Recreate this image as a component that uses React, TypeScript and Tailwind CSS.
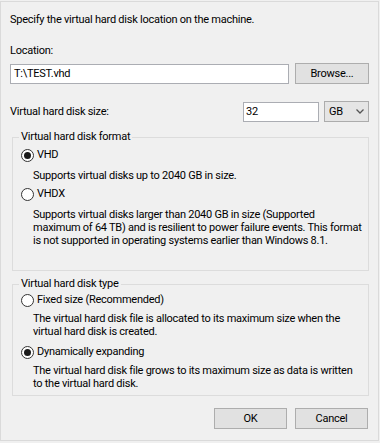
import { useState } from 'react';

function Radio({ checked, label, onClick }: { checked: boolean; label: string; onClick: () => void }) {
  return (
    <button type="button" onClick={onClick} className="flex h-[16px] items-center gap-[3px] text-left">
      <span className="flex h-[13px] w-[13px] items-center justify-center rounded-full border border-[#333333] bg-white">
        {checked && <span className="h-[7px] w-[7px] rounded-full bg-[#1a1a1a]" />}
      </span>
      <span>{label}</span>
    </button>
  );
}

function WinButton({ children }: { children: React.ReactNode }) {
  return (
    <button
      type="button"
      className="flex h-[21px] w-[73px] items-center justify-center border border-[#adadad] bg-[#e1e1e1] hover:border-[#0078d7] hover:bg-[#e5f1fb]"
    >
      {children}
    </button>
  );
}

export default function App() {
  const [format, setFormat] = useState<'vhd' | 'vhdx'>('vhd');
  const [diskType, setDiskType] = useState<'fixed' | 'dynamic'>('dynamic');

  return (
    <div className="h-[443px] w-[380px] whitespace-nowrap bg-[#f0f0f0] pt-[1px] font-['Roboto',sans-serif] text-[11px] leading-[16px] tracking-[-0.25px] text-black">
      <div className="flex h-[440px] w-[379px] flex-col border border-[#dadada] pt-[10px]">
        <p className="pl-[9px]">Specify the virtual hard disk location on the machine.</p>

        <p className="mt-[15px] pl-[9px]">Location:</p>
        <div className="mt-[4px] flex h-[21px] items-start pl-[9px]">
          <div className="mt-[1px] flex h-[20px] w-[279px] items-center border border-[#abadb3] bg-white pl-[3px]">
            T:\TEST.vhd
          </div>
          <div className="ml-[6px]">
            <button
              type="button"
              className="flex h-[21px] w-[74px] items-center justify-center border border-[#adadad] bg-[#e1e1e1] hover:border-[#0078d7] hover:bg-[#e5f1fb]"
            >
              Browse...
            </button>
          </div>
        </div>

        <div className="mt-[17px] flex h-[21px] items-center pl-[9px]">
          <span className="flex-1">Virtual hard disk size:</span>
          <div className="flex h-[20px] w-[76px] items-center border border-[#abadb3] bg-white pl-[2px]">32</div>
          <div className="ml-[5px] mr-[9px] flex h-[21px] w-[45px] items-center justify-between border border-[#acacac] bg-[#e5e5e5] pl-[4px] pr-[4px]">
            <span>GB</span>
            <svg width="8" height="5" viewBox="0 0 8 5" fill="none" stroke="#555" strokeWidth="1.3">
              <path d="M0.5 0.5 L4 4 L7.5 0.5" />
            </svg>
          </div>
        </div>

        <fieldset className="ml-[11px] mt-[7px] w-[357px] border border-[#dcdcdc] pb-[23px] pl-[8px]">
          <legend className="ml-[-2px] px-[2px]">Virtual hard disk format</legend>
          <div className="mt-[2px]">
            <Radio checked={format === 'vhd'} label="VHD" onClick={() => setFormat('vhd')} />
          </div>
          <p className="mt-[6px] pl-[12px] leading-[13px]">Supports virtual disks up to 2040 GB in size.</p>
          <div className="mt-[4px]">
            <Radio checked={format === 'vhdx'} label="VHDX" onClick={() => setFormat('vhdx')} />
          </div>
          <p className="mt-[6px] pl-[12px] leading-[13px]">
            Supports virtual disks larger than 2040 GB in size (Supported
            <br />
            maximum of 64 TB) and is resilient to power failure events. This format
            <br />
            is not supported in operating systems earlier than Windows 8.1.
          </p>
        </fieldset>

        <fieldset className="ml-[11px] mt-[5px] w-[357px] border border-[#dcdcdc] pb-[5px] pl-[8px]">
          <legend className="ml-[-2px] px-[2px]">Virtual hard disk type</legend>
          <div>
            <Radio checked={diskType === 'fixed'} label="Fixed size (Recommended)" onClick={() => setDiskType('fixed')} />
          </div>
          <p className="mt-[4px] pl-[12px] leading-[13px]">
            The virtual hard disk file is allocated to its maximum size when the
            <br />
            virtual hard disk is created.
          </p>
          <div className="mt-[6px]">
            <Radio checked={diskType === 'dynamic'} label="Dynamically expanding" onClick={() => setDiskType('dynamic')} />
          </div>
          <p className="mt-[4px] pl-[12px] leading-[13px]">
            The virtual hard disk file grows to its maximum size as data is written
            <br />
            to the virtual hard disk.
          </p>
        </fieldset>

        <div className="mt-[12px] flex justify-end gap-[8px] pr-[10px]">
          <WinButton>OK</WinButton>
          <WinButton>Cancel</WinButton>
        </div>
      </div>
    </div>
  );
}
